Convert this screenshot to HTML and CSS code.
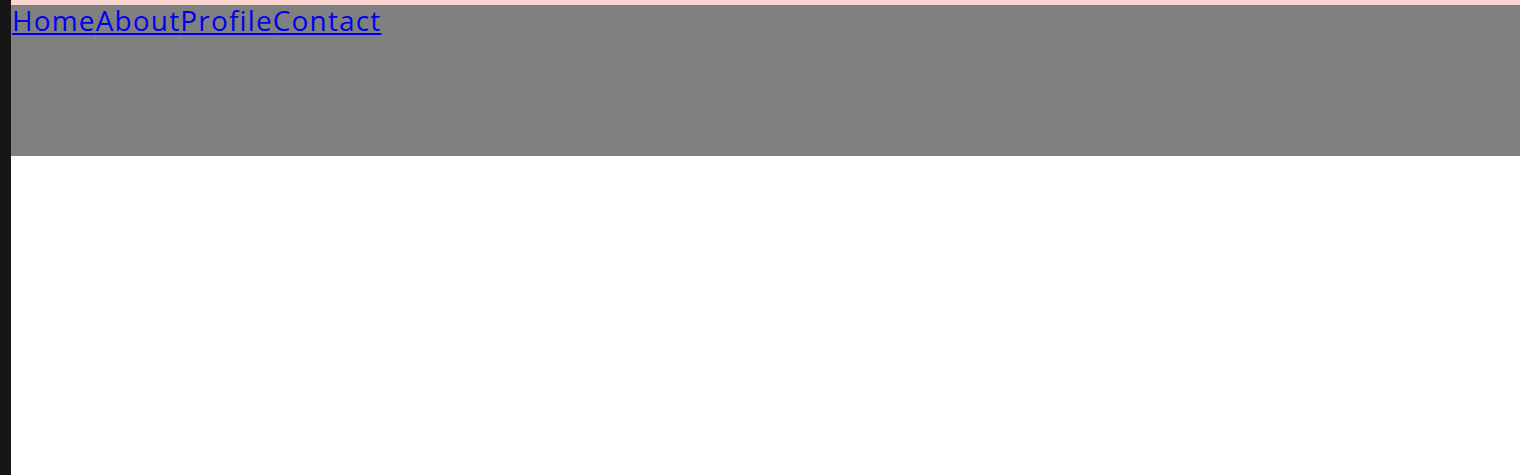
FILE: index.html
```html
<!DOCTYPE html>
<html>
<head>
<meta charset="utf-8">
<link rel="stylesheet" href="styles.css">
</head>
<body>
<div class="frame">
  <div class="side"></div>
  <div class="main">
    <div class="topline"></div>
    <header class="header">
      <nav class="nav"><a href="#">Home</a><a href="#">About</a><a href="#">Profile</a><a href="#">Contact</a></nav>
    </header>
  </div>
</div>
</body>
</html>
```

FILE: styles.css
```css
html, body { margin: 0; padding: 0; background: #fff; }
.frame { display: flex; height: 475px; }
.side { width: 11px; background: #161616; flex: none; }
.main { flex: 1; display: flex; flex-direction: column; }
.topline { height: 5px; background: #f8d6cf; }
.header { height: 151px; background: #808080; padding-left: 1px; }
.nav { display: flex; font-family: "Open Sans", sans-serif; font-size: 28px; line-height: 31px; letter-spacing: 1.15px; }
.nav a { color: #0000ee; text-decoration: underline; }
```
